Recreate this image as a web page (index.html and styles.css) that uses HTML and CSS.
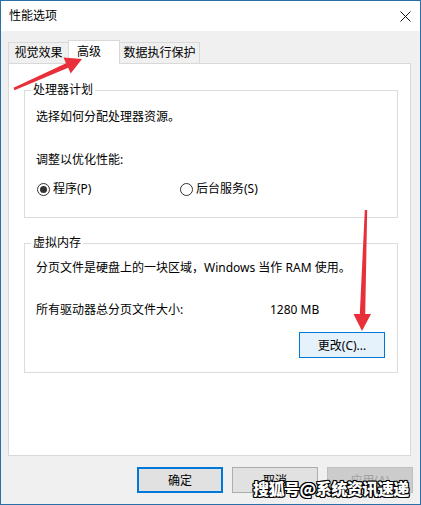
FILE: index.html
```html
<!DOCTYPE html>
<html lang="zh-CN">
<head>
<meta charset="utf-8">
<title>性能选项</title>
<link rel="stylesheet" href="styles.css">
</head>
<body>
<div class="window">
  <div class="titlebar">
    <span class="title">性能选项</span>
    <svg class="close" width="11" height="11" viewBox="0 0 11 11"><path d="M0.5 0.5 L10.5 10.5 M10.5 0.5 L0.5 10.5" stroke="#111" stroke-width="1" fill="none"/></svg>
  </div>
  <div class="body">
    <div class="tabs">
      <div class="tab first">视觉效果</div>
      <div class="tab active">高级</div>
      <div class="tab">数据执行保护</div>
    </div>
    <div class="panel">
      <fieldset class="group g1">
        <legend>处理器计划</legend>
        <p class="line t1">选择如何分配处理器资源。</p>
        <p class="line t2">调整以优化性能:</p>
        <div class="radios">
          <label class="radio"><span class="dot checked"></span>程序(P)</label>
          <label class="radio"><span class="dot"></span>后台服务(S)</label>
        </div>
      </fieldset>
      <fieldset class="group g2">
        <legend>虚拟内存</legend>
        <p class="line t3">分页文件是硬盘上的一块区域，Windows 当作 RAM 使用。</p>
        <div class="line size"><span>所有驱动器总分页文件大小:</span><span>1280 MB</span></div>
        <div class="btnrow"><button class="btn change">更改(C)...</button></div>
      </fieldset>
    </div>
    <div class="actions">
      <button class="btn default">确定</button>
      <button class="btn">取消</button>
      <button class="btn disabled">应用(A)</button>
    </div>
  </div>
  <svg class="arrows" width="421" height="505" viewBox="0 0 421 505">
    <polygon fill="#e8303a" points="13.5,87.8 66.0,63.3 63.5,57.5 82,59 70.7,73.6 68.2,67.8 14.5,90.2"/>
    <polygon fill="#e8303a" points="364.8,210 367.2,210 365.2,314 371,314 362,331 353.5,314 359.8,314"/>
  </svg>
  <div class="watermark">搜狐号@系统资讯速递</div>
</div>
</body>
</html>
```
FILE: styles.css
```css
* { box-sizing: border-box; }
html, body { margin: 0; padding: 0; background: #fff; }
body {
  font-family: "Noto Sans", "Noto Sans CJK SC", sans-serif;
  font-size: 12px;
  color: #000;
}
.window {
  position: relative;
  width: 421px;
  height: 505px;
  border: 1px solid #2a6fa8;
  display: flex;
  flex-direction: column;
  background: #f0f0f0;
  overflow: hidden;
}
.titlebar {
  height: 30px;
  background: #fff;
  display: flex;
  align-items: center;
  justify-content: space-between;
  padding: 0 9px 0 8px;
  flex: none;
}
.title { line-height: 16px; }
.close { display: block; }
.body {
  flex: 1;
  display: flex;
  flex-direction: column;
  padding: 9px 9px 11px 7px;
}
.tabs {
  display: flex;
  align-items: flex-end;
  margin-bottom: -1px;
  position: relative;
  z-index: 1;
  height: 24px;
}
.tab {
  height: 22px;
  border: 1px solid #d9d9d9;
  background: #f0f0f0;
  line-height: 19px;
  text-align: center;
  margin-left: -1px;
}
.tab.first { margin-left: 0; width: 61px; }
.tab:nth-child(3) { width: 81px; }
.tab.active {
  width: 52px;
  height: 24px;
  background: #fff;
  border-bottom: none;
  text-align: left;
  padding-left: 8px;
  line-height: 21px;
  position: relative;
  z-index: 2;
}
.panel {
  flex: 1;
  background: #fff;
  border: 1px solid #d9d9d9;
  padding: 0 12px 0 15px;
}
.group {
  margin: 0;
  border: 1px solid #dcdcdc;
  padding: 0 12px 0 11px;
  min-inline-size: 0;
}
.group legend {
  line-height: 16px;
  padding: 0 2px;
  margin-left: -5px;
}
.g1 { margin-top: 18px; padding-bottom: 20px; }
.g2 { margin-top: 17px; padding-bottom: 14px; }
.line { margin: 0; line-height: 16px; }
.t1 { margin-top: 11px; }
.t2 { margin-top: 27px; }
.t3 { margin-top: 9px; }
.radios {
  margin-top: 13px;
  display: grid;
  grid-template-columns: 143px auto;
  line-height: 16px;
}
.radio { display: flex; align-items: center; gap: 3px; margin-left: 1px; }
.dot {
  width: 13px;
  height: 13px;
  border: 1px solid #333;
  border-radius: 50%;
  display: inline-flex;
  align-items: center;
  justify-content: center;
}
.dot.checked::after {
  content: "";
  width: 7px;
  height: 7px;
  border-radius: 50%;
  background: #333;
}
.size {
  margin-top: 26px;
  display: grid;
  grid-template-columns: 234px auto;
}
.btnrow {
  margin-top: 14px;
  display: flex;
  justify-content: flex-end;
}
.btn {
  width: 86px;
  height: 26px;
  font-family: inherit;
  font-size: 12px;
  color: #000;
  background: #e1e1e1;
  border: 1px solid #adadad;
  padding: 0;
}
.btn.change { background: #e5f1fb; border-color: #0078d7; }
.actions {
  margin-top: 11px;
  margin-right: -2px;
  display: flex;
  justify-content: flex-end;
  gap: 9px;
}
.btn.default { border: 2px solid #0078d7; width: 86px; }
.btn.disabled { background: #cccccc; border-color: #bfbfbf; color: #a0a0a0; }
.arrows { position: absolute; left: -1px; top: -1px; pointer-events: none; z-index: 5; }
.watermark {
  position: absolute;
  left: 252px;
  top: 476px;
  z-index: 6;
  font-family: "Noto Sans CJK SC", sans-serif;
  font-weight: 900;
  font-size: 16px;
  line-height: 22px;
  letter-spacing: -0.5px;
  color: #fff;
  text-shadow: -1px -1px 0 #000, 1px -1px 0 #000, -1px 1px 0 #000, 1px 1px 0 #000, 0 1px 0 #000, 0 -1px 0 #000, 1px 0 0 #000, -1px 0 0 #000;
}
```
